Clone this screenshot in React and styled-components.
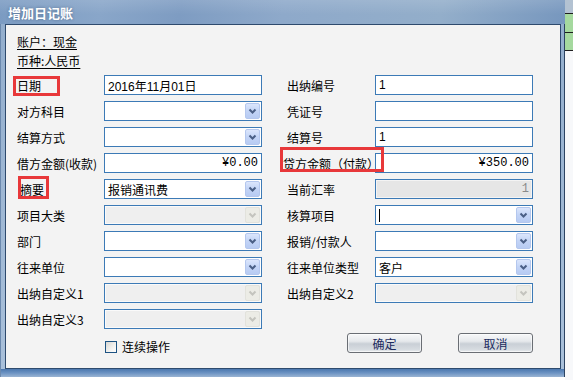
import React from 'react';
import styled, { createGlobalStyle, css } from 'styled-components';

const GlobalStyle = createGlobalStyle`
  body {
    margin: 0;
    background: #fff;
    font-family: "Noto Sans CJK SC", sans-serif;
  }
`;

const leftRows = [
    { label: '日期', kind: 'input', value: '2016年11月01日', mark: [-4, 2, 47, 20] },
    { label: '对方科目', kind: 'select' },
    { label: '结算方式', kind: 'select' },
    { label: '借方金额(收款)', kind: 'money', value: '¥0.00' },
    { label: '摘要', kind: 'select', value: '报销通讯费', indent: 3, mark: [1, -2, 31, 23] },
    { label: '项目大类', kind: 'select', disabled: true },
    { label: '部门', kind: 'select' },
    { label: '往来单位', kind: 'select' },
    { label: '出纳自定义1', kind: 'select', disabled: true },
    { label: '出纳自定义3', kind: 'select', disabled: true },
];

const rightRows = [
    { label: '出纳编号', kind: 'input', value: '1' },
    { label: '凭证号', kind: 'input' },
    { label: '结算号', kind: 'input', value: '1' },
    { label: '贷方金额（付款）', kind: 'money', value: '¥350.00', indent: -4, mark: [-3, -5, 104, 25] },
    { label: '当前汇率', kind: 'rate', value: '1' },
    { label: '核算项目', kind: 'select', caret: true },
    { label: '报销/付款人', kind: 'select' },
    { label: '往来单位类型', kind: 'select', value: '客户' },
    { label: '出纳自定义2', kind: 'select', disabled: true },
];

const Chevron = ({ disabled }) => (
    <svg width="13" height="14" viewBox="0 0 13 14">
        <path
            d="M3.5 5.5 L6.5 8.5 L9.5 5.5"
            fill="none"
            stroke={disabled ? '#c4c4be' : '#4a5f86'}
            strokeWidth="2"
        />
    </svg>
);

const Field = ({ row }) => {
    if (row.kind === 'select') {
        return (
            <SelectBox $disabled={row.disabled}>
                <Value>
                    {row.caret ? <Caret /> : row.value}
                </Value>
                <DropButton $disabled={row.disabled}>
                    <Chevron disabled={row.disabled} />
                </DropButton>
            </SelectBox>
        );
    }
    if (row.kind === 'money') {
        return (
            <TextBox>
                <Money>{row.value}</Money>
            </TextBox>
        );
    }
    if (row.kind === 'rate') {
        return (
            <TextBox $disabled>
                <Money $dim>{row.value}</Money>
            </TextBox>
        );
    }
    return (
        <TextBox>
            <Value>{row.value}</Value>
        </TextBox>
    );
};

const FormColumn = ({ rows, labelWidth }) => (
    <Column>
        {rows.map((row) => (
            <Row key={row.label} $labelWidth={labelWidth}>
                <Label $indent={row.indent} $mark={row.mark}>
                    {row.label}
                </Label>
                <Field row={row} />
            </Row>
        ))}
    </Column>
);

const App = () => {
    return (
        <>
            <GlobalStyle />
            <Page>
                <Window>
                    <TitleBar>增加日记账</TitleBar>
                    <Frame>
                        <Client>
                            <InfoLine>账户：现金</InfoLine>
                            <InfoLine>币种:人民币</InfoLine>
                            <Form>
                                <FormColumn rows={leftRows} labelWidth={87} />
                                <FormColumn rows={rightRows} labelWidth={88} />
                            </Form>
                            <BottomRow>
                                <CheckGroup>
                                    <CheckBox />
                                    <span>连续操作</span>
                                </CheckGroup>
                                <Buttons>
                                    <Button>确定</Button>
                                    <Button>取消</Button>
                                </Buttons>
                            </BottomRow>
                        </Client>
                    </Frame>
                    <BottomEdge />
                </Window>
                <SideStrip>
                    <SideCell $h={13} $bg="#b3c2d2" />
                    <SideCell $h={18} $bg="#a5d99f" $line />
                    <SideCell $h={17} $bg="#a5d99f" $line />
                    <SideCell $h={0} $bg="#a5d99f" $line />
                    <SideRest />
                </SideStrip>
            </Page>
        </>
    );
};

const Page = styled.div`
    display: flex;
    width: 573px;
    height: 380px;
    background: #fff;
    overflow: hidden;
`;

const Window = styled.div`
    width: 565px;
    height: 377px;
    display: flex;
    flex-direction: column;
`;

const TitleBar = styled.div`
    height: 24px;
    flex-shrink: 0;
    display: flex;
    align-items: center;
    padding-left: 8px;
    color: #fff;
    font-size: 13px;
    font-weight: 700;
    text-shadow: 0 0 3px rgba(30, 50, 80, 0.45);
    background: linear-gradient(
            180deg,
            rgba(255, 255, 255, 0.12),
            rgba(255, 255, 255, 0) 60%
        ),
        linear-gradient(
            100deg,
            #7b9bc2 0%,
            #89a6c9 18%,
            #7e9cc2 32%,
            #8ea9ca 50%,
            #93aeca 78%,
            #7797be 100%
        );
`;

const Frame = styled.div`
    flex: 1;
    display: flex;
    padding: 0 3px 0 4px;
    border-left: 1px solid #6b89ae;
    border-right: 1px solid #2c4362;
    background: linear-gradient(180deg, #93aecd, #a9c0da);
`;

const BottomEdge = styled.div`
    height: 8px;
    flex-shrink: 0;
    background: linear-gradient(180deg, #4b77ae, #6c93c3 50%, #9ab4d3);
    border-left: 1px solid #6b89ae;
    border-right: 1px solid #2c4362;
`;

const Client = styled.div`
    flex: 1;
    border: 1px solid #2e4a6d;
    background: #f3f3f3;
    padding: 7px 0 0 11px;
    font-size: 12px;
    color: #000;
`;

const InfoLine = styled.div`
    height: 19px;
    line-height: 19px;
    text-decoration: underline;
    text-underline-offset: 2px;
`;

const Form = styled.div`
    display: flex;
    gap: 25px;
    margin-top: 5px;
`;

const Column = styled.div`
    display: flex;
    flex-direction: column;
    gap: 6px;
`;

const Row = styled.div`
    display: grid;
    grid-template-columns: ${({ $labelWidth }) => $labelWidth}px 158px;
    height: 20px;
    align-items: center;
`;

const Label = styled.div`
    position: relative;
    white-space: nowrap;
    padding-top: 2px;
    line-height: 18px;
    ${({ $indent }) =>
        $indent > 0 &&
        css`
            padding-left: ${$indent}px;
        `}
    ${({ $indent }) =>
        $indent < 0 &&
        css`
            margin-left: ${$indent}px;
        `}
    ${({ $mark }) =>
        $mark &&
        css`
            z-index: 2;
            &::after {
                content: '';
                position: absolute;
                left: ${$mark[0]}px;
                top: ${$mark[1] - 1}px;
                width: ${$mark[2]}px;
                height: ${$mark[3]}px;
                box-sizing: border-box;
                border: 3px solid #e8383a;
            }
        `}
`;

const fieldBox = css`
    box-sizing: border-box;
    height: 20px;
    border: 1px solid #3c7ab6;
    display: flex;
    align-items: center;
`;

const TextBox = styled.div`
    ${fieldBox};
    background: ${({ $disabled }) => ($disabled ? '#e6e6e6' : '#fff')};
    box-shadow: ${({ $disabled }) =>
        $disabled ? 'inset 0 0 0 1px #f4f4f4' : 'none'};
`;

const SelectBox = styled.div`
    ${fieldBox};
    background: ${({ $disabled }) => ($disabled ? '#efefef' : '#fff')};
    box-shadow: ${({ $disabled }) =>
        $disabled ? 'inset 0 0 0 1px #fafafa' : 'none'};
`;

const Value = styled.div`
    flex: 1;
    padding-left: 3px;
    font-family: "Liberation Sans", "Noto Sans CJK SC", sans-serif;
    font-size: 12px;
    white-space: nowrap;
    overflow: hidden;
    display: flex;
    align-items: center;
`;

const Caret = styled.span`
    display: block;
    width: 1px;
    height: 13px;
    background: #000;
`;

const Money = styled.div`
    flex: 1;
    text-align: right;
    padding-right: 3px;
    font-family: "Liberation Mono", monospace;
    font-size: 12px;
    color: ${({ $dim }) => ($dim ? '#8a8a8a' : '#000')};
`;

const DropButton = styled.div`
    box-sizing: border-box;
    width: 15px;
    height: 16px;
    margin-right: 1px;
    border-radius: 2px;
    display: flex;
    align-items: center;
    justify-content: center;
    border: 1px solid
        ${({ $disabled }) => ($disabled ? '#e2e2dc' : '#b4c7ee')};
    background: ${({ $disabled }) =>
        $disabled
            ? '#ecece6'
            : 'linear-gradient(180deg, #dbe6fc 0%, #c3d4f6 50%, #b7cbf3 100%)'};
`;

const BottomRow = styled.div`
    display: flex;
    align-items: flex-end;
    width: 516px;
    height: 20px;
    margin-top: 4px;
`;

const CheckGroup = styled.div`
    display: flex;
    align-items: center;
    gap: 5px;
    padding-left: 88px;
    height: 12px;
    line-height: 12px;
`;

const CheckBox = styled.div`
    box-sizing: border-box;
    width: 12px;
    height: 12px;
    border: 1px solid #1d5383;
    background: linear-gradient(135deg, #d6d6d2 0%, #f2f2f0 60%, #fff 100%);
`;

const Buttons = styled.div`
    display: flex;
    gap: 36px;
    margin-left: auto;
`;

const Button = styled.div`
    box-sizing: border-box;
    width: 75px;
    height: 20px;
    border: 1px solid #6a6e74;
    border-radius: 3px;
    display: flex;
    align-items: center;
    justify-content: center;
    color: #1c2b5e;
    font-size: 12px;
    background: linear-gradient(
        180deg,
        #f7f8f9 0%,
        #e6e9ec 40%,
        #c9cfd6 55%,
        #d6dbe0 85%,
        #e8ebee 100%
    );
    box-shadow: inset 0 0 0 1px rgba(255, 255, 255, 0.6);
`;

const SideStrip = styled.div`
    width: 8px;
    display: flex;
    flex-direction: column;
`;

const SideCell = styled.div`
    height: ${({ $h }) => $h}px;
    background: ${({ $bg }) => $bg};
    border-top: ${({ $line }) => ($line ? '1px solid #1e1e1e' : 'none')};
`;

const SideRest = styled.div`
    flex: 1;
    background: #f7f8fa;
`;

export default App;
